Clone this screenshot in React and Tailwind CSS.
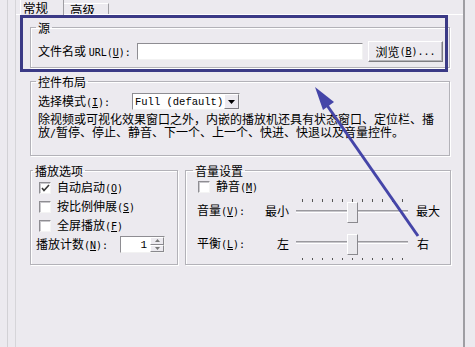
import React from 'react'

const mono = "font-['DejaVu_Sans_Mono',monospace] text-[10px]"

function Lat({ children }) {
  return <span className={mono}>{children}</span>
}

function Key({ k }) {
  return (
    <span className={mono}>
      (<u>{k}</u>)
    </span>
  )
}

function Group({ title, className, legendClass = 'ml-[5px]', children }) {
  return (
    <fieldset className={`border border-[#b3b2b8] shadow-[inset_1px_1px_0_#fff,1px_1px_0_#fff] ${className}`}>
      <legend className={`px-[2px] text-[12px] leading-[13px] ${legendClass}`}>{title}</legend>
      {children}
    </fieldset>
  )
}

function Check({ checked }) {
  return (
    <div className="w-[12px] h-[12px] bg-white border border-t-[#8e8d92] border-l-[#8e8d92] border-r-[#f4f4f4] border-b-[#f4f4f4] shadow-[inset_1px_1px_0_#c9c8cc] flex items-center justify-center">
      {checked && (
        <svg width="9" height="8" viewBox="0 0 9 8">
          <path d="M1 4 L3 6.5 L8 1" fill="none" stroke="#3a3a3a" strokeWidth="1.6" />
        </svg>
      )}
    </div>
  )
}

function Slider({ ticksTop, ticksBottom }) {
  const ticks = [0, 1, 2, 3, 4, 5, 6, 7, 8, 9, 10]
  return (
    <div className="relative w-[112px] h-full">
      {ticksTop && (
        <div className="absolute left-[6px] top-[3px] w-[101px] flex justify-between">
          {ticks.map(t => <div key={t} className="w-px h-[3px] bg-[#555]" />)}
        </div>
      )}
      <div className={`absolute left-0 right-0 ${ticksTop ? 'top-[14px]' : 'top-[13px]'} h-[3px] border-t border-t-[#9a999e] border-b border-b-white bg-[#c8c7cc]`} />
      <div className="absolute left-[51px] top-[6px] w-[11px] h-[21px] bg-[#e9e8ec] border border-t-white border-l-white border-r-[#8a898e] border-b-[#8a898e]" />
      {ticksBottom && (
        <div className="absolute left-[6px] top-[30px] w-[101px] flex justify-between">
          {ticks.map(t => <div key={t} className="w-px h-[2px] bg-[#555]" />)}
        </div>
      )}
    </div>
  )
}

export default function App() {
  return (
    <div className="relative w-[475px] h-[347px] overflow-hidden bg-[#eceaef] text-black font-['Noto_Sans_CJK_SC',sans-serif] text-[12px] leading-[14px]">
      <div className="flex h-full">
        <div className="w-[7px]" />
        <div className="w-px bg-[#d2d1d5]" />
        <div className="w-[7px]" />
        {/* dialog page */}
        <div className="w-[450px] flex flex-col border-l border-l-[#d6d5d9] border-r-2 border-r-[#9f9ea3]">
          {/* tabs */}
          <div className="flex h-[14px] pl-[4px] items-end">
            <div className="w-[44px] h-[15px] border-r border-r-[#9f9ea3] border-l border-l-white pl-[2px] pt-px leading-[13px] text-[12.5px] relative -mb-px bg-[#eceaef] z-10">常规</div>
            <div className="w-[45px] h-[11px] border-t border-t-white border-r border-r-[#9f9ea3] pl-[6px] leading-[12px] text-[12.5px]">高级</div>
          </div>
          <div className="flex-1 border-t border-t-white pl-[14px] pr-[12px]">
            <Group title="源" className="mt-[6px] h-[47px] w-[420px]">
              <div className="flex items-center mt-[7px] h-[21px] pl-[7px]">
                <div className="w-[96px] whitespace-nowrap">文件名或 <Lat>URL</Lat><Key k="U" /><Lat>:</Lat></div>
                <div className="ml-[3px] w-[226px] h-[17px] bg-white border border-t-[#8e8d92] border-l-[#8e8d92] border-r-[#f2f2f2] border-b-[#f2f2f2]" />
                <div className="ml-[5px] w-[75px] h-[21px] flex items-center justify-center bg-[#eceaef] border border-t-white border-l-white border-r-[#7f7e83] border-b-[#7f7e83] shadow-[inset_-1px_-1px_0_#b5b4b9] whitespace-nowrap">
                  浏览<Key k="B" /><Lat>...</Lat>
                </div>
              </div>
            </Group>

            <Group title="控件布局" className="mt-[7px] h-[81px] w-[420px]">
              <div className="flex items-center mt-[5px] h-[17px] pl-[7px]">
                <div className="w-[94px] whitespace-nowrap">选择模式<Key k="I" /><Lat>:</Lat></div>
                <div className="w-[108px] h-[17px] bg-white border border-t-[#8e8d92] border-l-[#8e8d92] border-r-[#f2f2f2] border-b-[#f2f2f2] flex items-center">
                  <span className="flex-1 pl-[2px] font-['Liberation_Mono',monospace] text-[10.5px]">Full (default)</span>
                  <div className="w-[15px] h-[15px] bg-[#eceaef] border border-t-white border-l-white border-r-[#7f7e83] border-b-[#7f7e83] flex items-center justify-center">
                    <svg width="7" height="4" viewBox="0 0 7 4"><path d="M0 0 H7 L3.5 4 Z" fill="#000" /></svg>
                  </div>
                </div>
              </div>
              <div className="pl-[7px] mt-[2px] leading-[13px] whitespace-nowrap">
                除视频或可视化效果窗口之外，内嵌的播放机还具有状态窗口、定位栏、播<br />
                放<Lat>/</Lat>暂停、停止、静音、下一个、上一个、快进、快退以及音量控件。
              </div>
            </Group>

            <div className="flex mt-[8px] gap-[7px]">
              <Group title="播放选项" className="h-[101px] w-[148px]" legendClass="ml-[2px]">
                <div className="flex items-center h-[19px] mt-px pl-[8px] gap-[6px]"><Check checked /><span>自动启动<Key k="O" /></span></div>
                <div className="flex items-center h-[19px] pl-[8px] gap-[6px]"><Check /><span>按比例伸展<Key k="S" /></span></div>
                <div className="flex items-center h-[19px] pl-[8px] gap-[6px]"><Check /><span>全屏播放<Key k="F" /></span></div>
                <div className="flex items-center h-[19px] pl-[5px]">
                  <span className="w-[84px] whitespace-nowrap">播放计数<Key k="N" /><Lat>:</Lat></span>
                  <div className="w-[45px] h-[17px] bg-white border border-t-[#8e8d92] border-l-[#8e8d92] border-r-[#f2f2f2] border-b-[#f2f2f2] flex items-center">
                    <span className="flex-1 text-right pr-[3px] font-['Liberation_Mono',monospace] text-[11px]">1</span>
                    <div className="w-[14px] h-[15px] flex flex-col">
                      <div className="flex-1 bg-[#eceaef] border border-t-white border-l-white border-r-[#8a898e] border-b-[#8a898e] flex items-center justify-center">
                        <svg width="5" height="3" viewBox="0 0 5 3"><path d="M0 3 H5 L2.5 0 Z" fill="#777" /></svg>
                      </div>
                      <div className="flex-1 bg-[#eceaef] border border-t-white border-l-white border-r-[#8a898e] border-b-[#8a898e] flex items-center justify-center">
                        <svg width="5" height="3" viewBox="0 0 5 3"><path d="M0 0 H5 L2.5 3 Z" fill="#777" /></svg>
                      </div>
                    </div>
                  </div>
                </div>
              </Group>

              <Group title="音量设置" className="h-[101px] w-[266px]" legendClass="ml-[7px]">
                <div className="flex items-center h-[18px] mt-px pl-[12px] gap-[6px]"><Check /><span>静音<Key k="M" /></span></div>
                <div className="flex items-center h-[30px] pl-[11px]">
                  <span className="w-[66px] whitespace-nowrap">音量<Key k="V" /><Lat>:</Lat></span>
                  <span className="w-[26px] text-right">最小</span>
                  <div className="ml-[7px] h-full"><Slider ticksTop /></div>
                  <span className="ml-[8px]">最大</span>
                </div>
                <div className="flex items-center h-[32px] mt-[2px] pl-[11px]">
                  <span className="w-[66px] whitespace-nowrap">平衡<Key k="L" /><Lat>:</Lat></span>
                  <span className="w-[26px] text-right">左</span>
                  <div className="ml-[7px] h-full"><Slider ticksBottom /></div>
                  <span className="ml-[9px]">右</span>
                </div>
              </Group>
            </div>
          </div>
        </div>
      </div>

      {/* annotation: highlight box */}
      <div className="absolute left-[20px] top-[15px] w-[428px] h-[57px] border-[3px] border-[#3b3a86]" />
      {/* annotation: arrow */}
      <svg className="absolute left-0 top-0" width="475" height="347" viewBox="0 0 475 347">
        <line x1="418" y1="236" x2="324" y2="101" stroke="#4545a8" strokeWidth="3" />
        <path d="M315 87 L334 102 L323 110 Z" fill="#4545a8" />
      </svg>
    </div>
  )
}
